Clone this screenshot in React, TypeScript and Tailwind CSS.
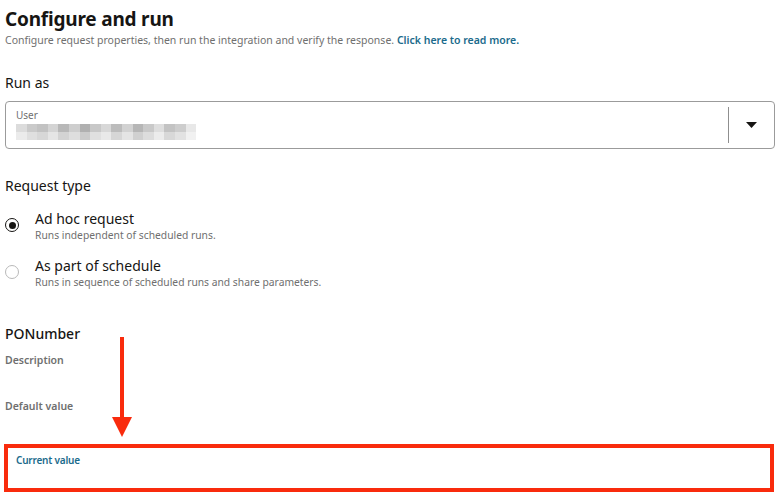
const blurRow1 = ['#dcdcdc', '#cacaca', '#c2c2c2', '#d4d4d4', '#b8b8b8', '#cecece', '#b0b0b0', '#c8c8c8', '#d8d8d8', '#bcbcbc', '#d2d2d2', '#b6b6b6', '#c9c9c9', '#dedede', '#c3c3c3', '#cdcdcd', '#e8e8e8'];
const blurRow2 = ['#ebebeb', '#dfdfdf', '#d7d7d7', '#e5e5e5', '#d3d3d3', '#dedede', '#cbcbcb', '#e0e0e0', '#e9e9e9', '#d6d6d6', '#e4e4e4', '#d0d0d0', '#dddddd', '#ececec', '#d8d8d8', '#e2e2e2', '#f1f1f1'];

function BlurredValue() {
  return (
    <div className="mt-[3px] flex flex-col">
      <div className="flex h-[8px]">
        {blurRow1.map((c, i) => (
          <div key={i} className="h-full w-[10.6px]" style={{ backgroundColor: c }} />
        ))}
      </div>
      <div className="flex h-[8px]">
        {blurRow2.map((c, i) => (
          <div key={i} className="h-full w-[10.6px]" style={{ backgroundColor: c }} />
        ))}
      </div>
    </div>
  );
}

function Radio({ checked }: { checked?: boolean }) {
  return (
    <span
      className={
        'mt-[8px] flex h-[14px] w-[14px] shrink-0 items-center justify-center rounded-full border ' +
        (checked ? 'border-[#161513] border-[1.5px]' : 'border-[#b9b9b9]')
      }
    >
      {checked && <span className="h-[7px] w-[7px] rounded-full bg-[#161513]" />}
    </span>
  );
}

function RadioOption({ title, desc, checked }: { title: string; desc: string; checked?: boolean }) {
  return (
    <div className="flex gap-[16px]">
      <Radio checked={checked} />
      <div>
        <div className="text-[14px] leading-[18px] text-[#161513]">{title}</div>
        <div className="text-[10.3px] leading-[14px] text-[#6f6f6f]">{desc}</div>
      </div>
    </div>
  );
}

export default function App() {
  return (
    <div className="relative h-[502px] w-[780px] overflow-hidden bg-white font-['Noto_Sans',sans-serif] text-[#161513]">
      <div className="px-[5px] pt-[6px]">
        <h1 className="text-[19px] font-bold leading-[26px] tracking-[-0.2px]">Configure and run</h1>
        <p className="mt-[1px] text-[10.5px] leading-[14px] text-[#6f6f6f]">
          Configure request properties, then run the integration and verify the response.{' '}
          <span className="font-semibold text-[#1b6b8c]">Click here to read more.</span>
        </p>

        <h2 className="mt-[27px] text-[14px] leading-[18px]">Run as</h2>
        <div className="mt-[9px] flex h-[48px] items-stretch rounded-[4px] border border-[#9b9b9b]">
          <div className="flex-1 pl-[10px] pt-[7px]">
            <div className="text-[10px] leading-[12px] text-[#6f6f6f]">User</div>
            <BlurredValue />
          </div>
          <div className="my-[5px] w-px bg-[#8f8f8f]" />
          <div className="flex w-[45px] items-center justify-center">
            <svg width="11" height="6" viewBox="0 0 11 6">
              <path d="M0 0h11L5.5 6z" fill="#161513" />
            </svg>
          </div>
        </div>

        <h2 className="mt-[28px] text-[14px] leading-[18px]">Request type</h2>
        <div className="mt-[15px] flex flex-col gap-[15px]">
          <RadioOption checked title="Ad hoc request" desc="Runs independent of scheduled runs." />
          <RadioOption title="As part of schedule" desc="Runs in sequence of scheduled runs and share parameters." />
        </div>

        <h2 className="mt-[36px] text-[14px] font-medium leading-[18px]">PONumber</h2>
        <div className="mt-[10px] text-[10.5px] font-semibold leading-[14px] text-[#6f6f6f]">Description</div>
        <div className="mt-[32px] text-[10.5px] font-semibold leading-[14px] text-[#6f6f6f]">Default value</div>
      </div>

      <div className="absolute left-[112px] top-[337px]">
        <svg width="20" height="100" viewBox="0 0 20 100">
          <rect x="8" y="0" width="4" height="82" fill="#f92b0d" />
          <path d="M0 80h20L10 100z" fill="#f92b0d" />
        </svg>
      </div>

      <div className="mx-[4px] mt-[31px] h-[48px] w-[770px] border-[4px] border-[#f92b0d] pl-[8px] pt-[6px]">
        <div className="text-[10px] font-semibold leading-[13px] tracking-[-0.2px] text-[#1b6b8c]">Current value</div>
      </div>
    </div>
  );
}
